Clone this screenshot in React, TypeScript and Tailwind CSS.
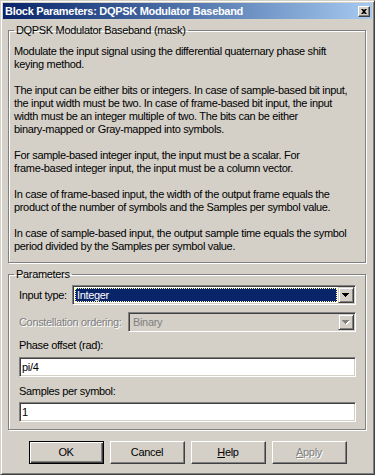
import React from 'react';

const font = "font-['Liberation_Sans',Arial,sans-serif] text-[11px] tracking-[-0.33px]";
const raised =
  'border border-t-white border-l-white border-r-[#404040] border-b-[#404040] shadow-[inset_-1px_-1px_0_#808080]';
const sunken =
  'border border-t-[#808080] border-l-[#808080] border-r-white border-b-white shadow-[inset_1px_1px_0_#404040,inset_-1px_-1px_0_#d4d0c8]';
const etched = 'border border-[#808080] shadow-[inset_1px_1px_0_#fff,1px_1px_0_#fff]';
const disabledText = 'text-[#808080] [text-shadow:1px_1px_0_#fff]';

const paragraphs = [
  ['Modulate the input signal using the differential quaternary phase shift', 'keying method.'],
  [
    'The input can be either bits or integers. In case of sample-based bit input,',
    'the input width must be two. In case of frame-based bit input, the input',
    'width must be an integer multiple of two. The bits can be either',
    'binary-mapped or Gray-mapped into symbols.',
  ],
  [
    'For sample-based integer input, the input must be a scalar. For',
    'frame-based integer input, the input must be a column vector.',
  ],
  [
    'In case of frame-based input, the width of the output frame equals the',
    'product of the number of symbols and the Samples per symbol value.',
  ],
  [
    'In case of sample-based input, the output sample time equals the symbol',
    'period divided by the Samples per symbol value.',
  ],
];

const Arrow = ({ disabled }: { disabled?: boolean }) => (
  <svg width="8" height="5" viewBox="0 0 8 5" className="block">
    {disabled && <path d="M1 1h7v1h-1v1h-1v1h-1v1h-1v-1h-1v-1h-1v-1h-1z" fill="#fff" />}
    <path d="M0 0h7v1h-1v1h-1v1h-1v1h-1v-1h-1v-1h-1v-1h-1z" fill={disabled ? '#808080' : '#000'} />
  </svg>
);

const DropButton = ({ disabled }: { disabled?: boolean }) => (
  <div className="w-[16px] h-[16px] bg-[#d4d0c8] flex items-center justify-center pt-[1px] border border-t-[#d4d0c8] border-l-[#d4d0c8] border-r-[#404040] border-b-[#404040] shadow-[inset_1px_1px_0_#fff,inset_-1px_-1px_0_#808080]">
    <Arrow disabled={disabled} />
  </div>
);

const Edit = ({ value }: { value: string }) => (
  <div className={`h-[20px] bg-white p-[1px] pl-[2px] leading-[16px] text-black ${sunken}`}>{value}</div>
);

const Button = ({ children, isDefault, disabled }: { children: React.ReactNode; isDefault?: boolean; disabled?: boolean }) => (
  <div
    className={`w-[75px] h-[23px] flex items-center justify-center ${
      isDefault
        ? 'border border-black shadow-[inset_1px_1px_0_#fff,inset_-1px_-1px_0_#404040,inset_-2px_-2px_0_#808080]'
        : raised
    } ${disabled ? disabledText : 'text-black'}`}
  >
    {children}
  </div>
);

export default function App() {
  return (
    <div
      className={`w-[375px] h-[475px] bg-[#d4d0c8] p-[2px] border border-t-[#d4d0c8] border-l-[#d4d0c8] border-r-[#404040] border-b-[#404040] shadow-[inset_1px_1px_0_#fff,inset_-1px_-1px_0_#808080] flex flex-col ${font}`}
    >
      {/* caption */}
      <div className="h-[16px] shrink-0 flex items-center justify-between pl-[2px] pr-[2px] bg-linear-to-r from-[#0a246a] to-[#a6caf0]">
        <span className="text-white font-bold tracking-[-0.3px]">Block Parameters: DQPSK Modulator Baseband</span>
        <div className={`w-[12px] h-[11px] bg-[#d4d0c8] flex items-center justify-center ${raised}`}>
          <svg width="6" height="5" viewBox="0 0 6 5" className="block">
            <path d="M0 0h2l1 1 1-1h2l-2 2.5 2 2.5h-2l-1-1-1 1h-2l2-2.5z" fill="#000" />
          </svg>
        </div>
      </div>

      {/* description */}
      <fieldset className={`mt-[5px] ml-[5px] w-[358px] pl-[5px] pt-[8px] pb-[9px] ${etched}`}>
        <legend className="ml-[0px] px-[2px] leading-[13px] text-black">DQPSK Modulator Baseband (mask)</legend>
        <div className="flex flex-col gap-[13px] text-black">
          {paragraphs.map((lines, i) => (
            <div key={i}>
              {lines.map((line, j) => (
                <div key={j} className="leading-[13px] whitespace-nowrap">
                  {line}
                </div>
              ))}
            </div>
          ))}
        </div>
      </fieldset>

      {/* parameters */}
      <fieldset className={`mt-[5px] ml-[5px] w-[358px] pl-[10px] pr-[9px] pt-[4px] pb-[7px] ${etched}`}>
        <legend className="ml-[-5px] px-[2px] leading-[13px] text-black">Parameters</legend>
        <div className="flex flex-col">
          <div className="flex items-center h-[20px]">
            <span className="w-[53px] text-black">Input type:</span>
            <div className={`flex-1 h-[20px] flex bg-white p-[1px] ${sunken}`}>
              <div className="flex-1 m-[1px] bg-[#0a246a] border border-dotted border-[#ffffa0] text-white leading-[12px] pl-[1px]">
                Integer
              </div>
              <DropButton />
            </div>
          </div>

          <div className="flex items-center h-[20px] mt-[7px]">
            <span className={`w-[109px] ${disabledText}`}>Constellation ordering:</span>
            <div className={`flex-1 h-[20px] flex bg-[#d4d0c8] p-[1px] ${sunken}`}>
              <div className="flex-1 pl-[3px] leading-[16px] text-[#808080]">Binary</div>
              <DropButton disabled />
            </div>
          </div>

          <div className="mt-[7px] leading-[13px] text-black">Phase offset (rad):</div>
          <div className="mt-[5px]">
            <Edit value="pi/4" />
          </div>

          <div className="mt-[8px] leading-[13px] text-black">Samples per symbol:</div>
          <div className="mt-[4px]">
            <Edit value="1" />
          </div>
        </div>
      </fieldset>

      {/* buttons */}
      <div className="flex justify-center gap-[6px] mt-[11px]">
        <Button isDefault>OK</Button>
        <Button>Cancel</Button>
        <Button>
          <span className="underline underline-offset-1">H</span>elp
        </Button>
        <Button disabled>
          <span className="underline underline-offset-1">A</span>pply
        </Button>
      </div>
    </div>
  );
}
